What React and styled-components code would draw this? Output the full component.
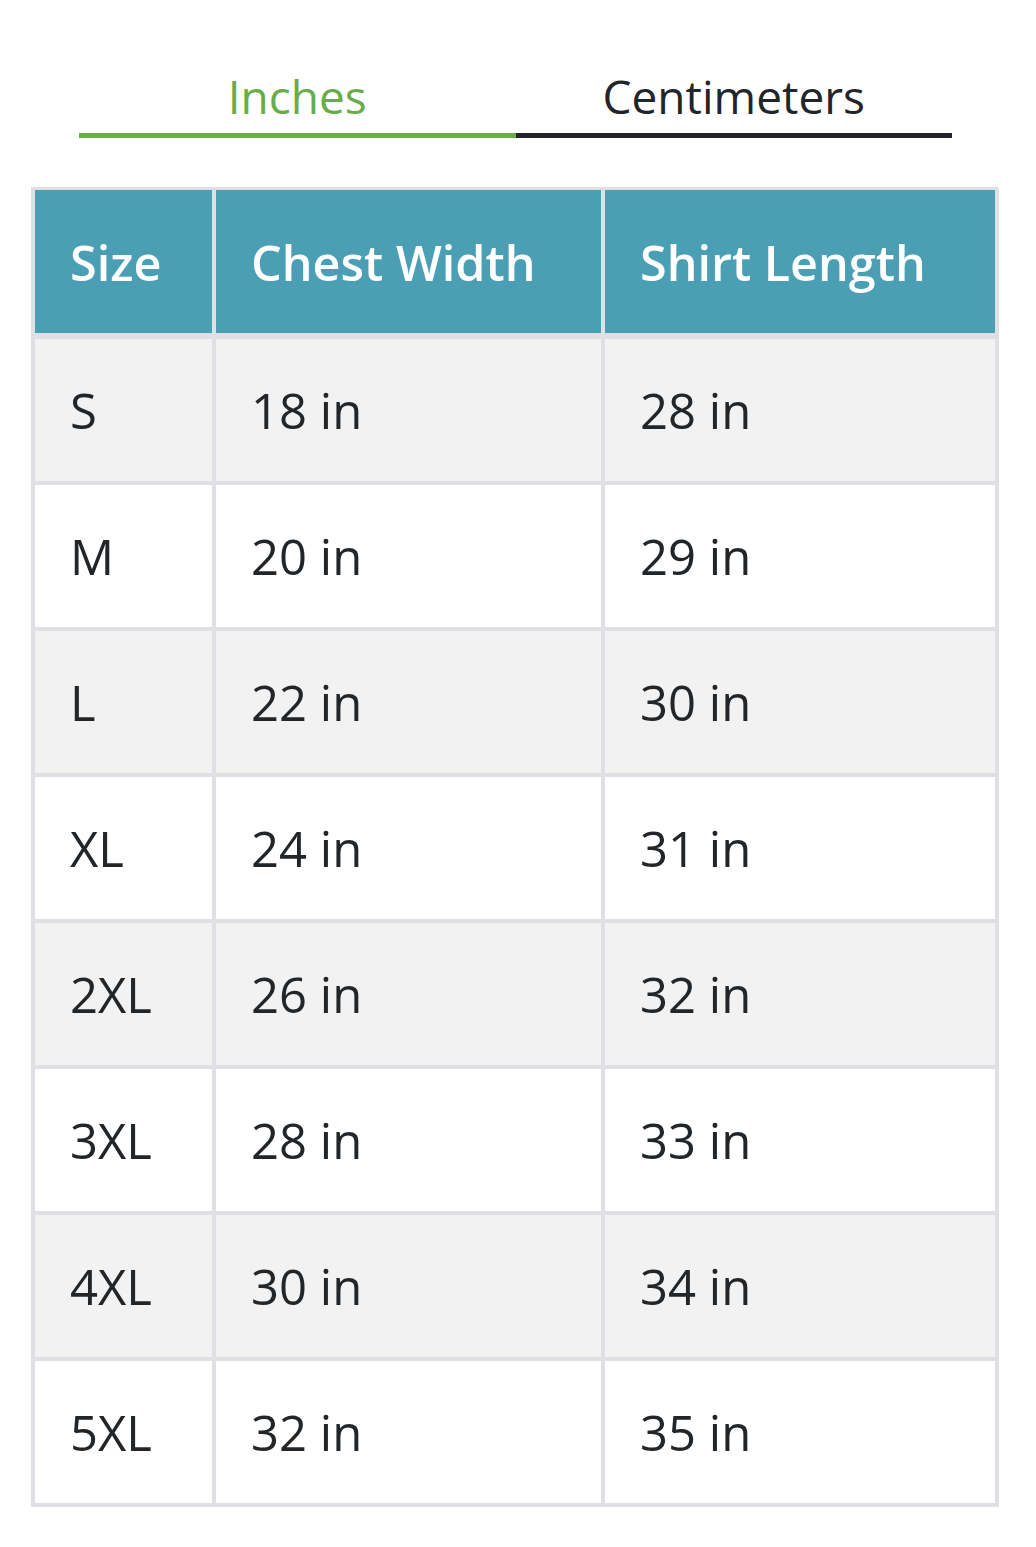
import React, { useState } from "react";
import styled, { createGlobalStyle } from "styled-components";

const Global = createGlobalStyle`
  html, body { margin: 0; padding: 0; background: #ffffff; }
  body { font-family: "Open Sans", "Noto Sans", sans-serif; color: #232629; }
`;

const Page = styled.div`
  padding: 67px 37px 40px 31px;
`;

const Tabs = styled.div`
  display: grid;
  grid-template-columns: 1fr 1fr;
  margin: 0 47px 49px 48px;
`;

const Tab = styled.button`
  appearance: none;
  background: none;
  border: none;
  border-bottom: 5px solid ${(p) => (p.$active ? "#67ad4b" : "#222529")};
  padding: 0 0 8px;
  font-family: inherit;
  font-size: 46px;
  line-height: 58px;
  color: ${(p) => (p.$active ? "#67ad4b" : "#222529")};
  cursor: pointer;
`;

const Table = styled.table`
  width: 968px;
  border-collapse: collapse;
  table-layout: fixed;
  border: 3px solid #dfe0e4;
`;

const HeadCell = styled.th`
  background: #4b9fb5;
  color: #ffffff;
  font-weight: 600;
  text-align: left;
  font-size: 48.5px;
  height: 143px;
  padding: 0 0 0 35px;
  border: 4px solid #dfe0e4;
  border-bottom-width: 6px;
  border-top-width: 3px;
`;

const Row = styled.tr`
  background: ${(p) => (p.$striped ? "#f2f2f3" : "#ffffff")};
`;

const Cell = styled.td`
  font-size: 49px;
  height: 142px;
  padding: 0 0 0 35px;
  border: 4px solid #dfe0e4;
  color: #232629;
`;

const rows = [
  ["S", "18 in", "28 in"],
  ["M", "20 in", "29 in"],
  ["L", "22 in", "30 in"],
  ["XL", "24 in", "31 in"],
  ["2XL", "26 in", "32 in"],
  ["3XL", "28 in", "33 in"],
  ["4XL", "30 in", "34 in"],
  ["5XL", "32 in", "35 in"],
];

export default function App() {
  const [unit, setUnit] = useState("in");
  return (
    <>
      <Global />
      <Page>
        <Tabs>
          <Tab $active={unit === "in"} onClick={() => setUnit("in")}>Inches</Tab>
          <Tab $active={unit === "cm"} onClick={() => setUnit("cm")}>Centimeters</Tab>
        </Tabs>
        <Table>
          <colgroup>
            <col style={{ width: 181 }} />
            <col style={{ width: 389 }} />
            <col />
          </colgroup>
          <thead>
            <tr>
              <HeadCell>Size</HeadCell>
              <HeadCell>Chest Width</HeadCell>
              <HeadCell>Shirt Length</HeadCell>
            </tr>
          </thead>
          <tbody>
            {rows.map((r, i) => (
              <Row key={r[0]} $striped={i % 2 === 0}>
                <Cell>{r[0]}</Cell>
                <Cell>{r[1]}</Cell>
                <Cell>{r[2]}</Cell>
              </Row>
            ))}
          </tbody>
        </Table>
      </Page>
    </>
  );
}
